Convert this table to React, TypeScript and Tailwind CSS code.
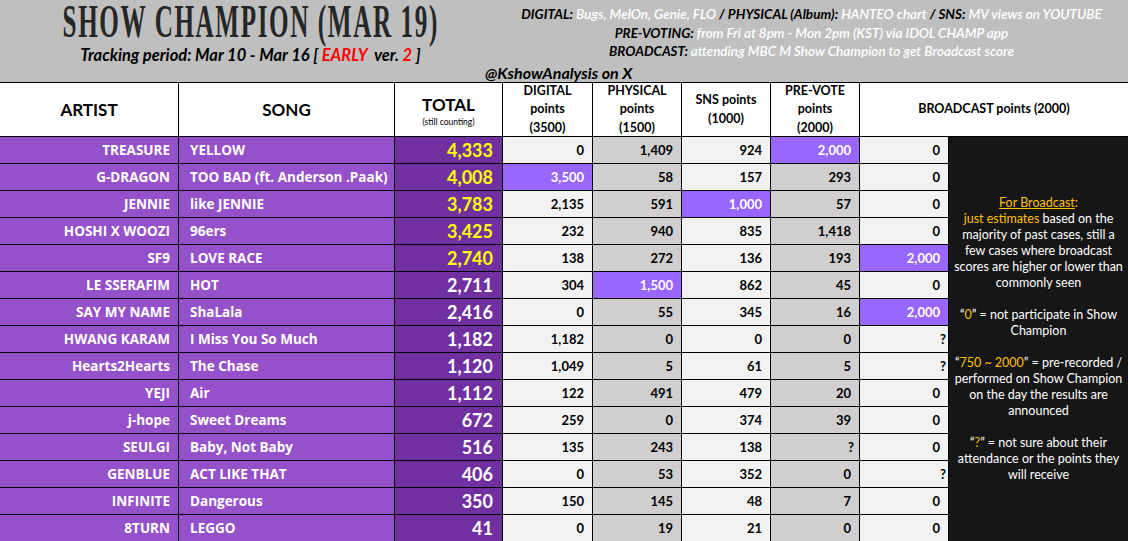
import React from "react";

type Row = {
  artist: string;
  song: string;
  total: string;
  top: boolean;
  cells: string[];
  hi: number; // index of highlighted cell, -1 none
};

const rows: Row[] = [
  { artist: "TREASURE", song: "YELLOW", total: "4,333", top: true, cells: ["0", "1,409", "924", "2,000", "0"], hi: 3 },
  { artist: "G-DRAGON", song: "TOO BAD (ft. Anderson .Paak)", total: "4,008", top: true, cells: ["3,500", "58", "157", "293", "0"], hi: 0 },
  { artist: "JENNIE", song: "like JENNIE", total: "3,783", top: true, cells: ["2,135", "591", "1,000", "57", "0"], hi: 2 },
  { artist: "HOSHI X WOOZI", song: "96ers", total: "3,425", top: true, cells: ["232", "940", "835", "1,418", "0"], hi: -1 },
  { artist: "SF9", song: "LOVE RACE", total: "2,740", top: true, cells: ["138", "272", "136", "193", "2,000"], hi: 4 },
  { artist: "LE SSERAFIM", song: "HOT", total: "2,711", top: false, cells: ["304", "1,500", "862", "45", "0"], hi: 1 },
  { artist: "SAY MY NAME", song: "ShaLala", total: "2,416", top: false, cells: ["0", "55", "345", "16", "2,000"], hi: 4 },
  { artist: "HWANG KARAM", song: "I Miss You So Much", total: "1,182", top: false, cells: ["1,182", "0", "0", "0", "?"], hi: -1 },
  { artist: "Hearts2Hearts", song: "The Chase", total: "1,120", top: false, cells: ["1,049", "5", "61", "5", "?"], hi: -1 },
  { artist: "YEJI", song: "Air", total: "1,112", top: false, cells: ["122", "491", "479", "20", "0"], hi: -1 },
  { artist: "j-hope", song: "Sweet Dreams", total: "672", top: false, cells: ["259", "0", "374", "39", "0"], hi: -1 },
  { artist: "SEULGI", song: "Baby, Not Baby", total: "516", top: false, cells: ["135", "243", "138", "?", "0"], hi: -1 },
  { artist: "GENBLUE", song: "ACT LIKE THAT", total: "406", top: false, cells: ["0", "53", "352", "0", "?"], hi: -1 },
  { artist: "INFINITE", song: "Dangerous", total: "350", top: false, cells: ["150", "145", "48", "7", "0"], hi: -1 },
  { artist: "8TURN", song: "LEGGO", total: "41", top: false, cells: ["0", "19", "21", "0", "0"], hi: -1 },
];

const colBg = ["bg-[#f2f2f2]", "bg-[#d0cece]", "bg-[#f2f2f2]", "bg-[#d0cece]", "bg-[#f2f2f2]"];

function Header() {
  return (
    <div className="flex h-[82px] bg-[#bfbfbf]">
      <div className="w-[483px] pl-[18px] flex flex-col items-center">
        <div className="flex justify-center w-full h-[42px]">
          <span className="inline-block whitespace-nowrap scale-x-[0.535] origin-center text-[47px] leading-[42px] font-bold tracking-[3px] text-[#262626] font-['Liberation_Serif',serif]">
            SHOW CHAMPION (MAR 19)
          </span>
        </div>
        <div className="mt-[3px] text-[16.5px] leading-[20px] font-bold italic text-black whitespace-nowrap">
          Tracking period: Mar 10 - Mar 16 [ <span className="text-[#ff0000]">EARLY</span>&nbsp; ver.{" "}
          <span className="text-[#ff0000]">2</span> ]
        </div>
      </div>
      <div className="flex-1 flex flex-col">
        <div className="pl-[12px] pt-[5px] flex flex-col items-center text-[13.5px] leading-[18.5px] font-bold italic whitespace-nowrap">
          <div>
            <span className="text-black">DIGITAL:</span>{" "}
            <span className="text-white font-semibold">Bugs, MelOn, Genie, FLO</span>{" "}
            <span className="text-black">/ PHYSICAL (Album):</span>{" "}
            <span className="text-white font-semibold">HANTEO chart</span>{" "}
            <span className="text-black">/ SNS:</span>{" "}
            <span className="text-white font-semibold">MV views on YOUTUBE</span>
          </div>
          <div>
            <span className="text-black">PRE-VOTING:</span>{" "}
            <span className="text-white font-semibold">from Fri at 8pm - Mon 2pm (KST) via IDOL CHAMP app</span>
          </div>
          <div>
            <span className="text-black">BROADCAST:</span>{" "}
            <span className="text-white font-semibold">attending MBC M Show Champion to get Broadcast score</span>
          </div>
        </div>
        <div className="mt-auto pl-[2px] text-[16px] leading-[19px] font-bold italic text-black">
          @KshowAnalysis on X
        </div>
      </div>
    </div>
  );
}

function Panel() {
  const o = "text-[#ffc000]";
  return (
    <div className="col-start-9 row-start-2 row-span-15 bg-[#161616] flex flex-col items-center justify-center text-white text-[12.5px] leading-[16px] whitespace-nowrap">
      <div className={o}>
        <span className="underline">For Broadcast</span>:
      </div>
      <div>
        <span className={o}>just estimates</span> based on the
      </div>
      <div>majority of past cases, still a</div>
      <div>few cases where broadcast</div>
      <div>scores are higher or lower than</div>
      <div>commonly seen</div>
      <div className="h-[16px]" />
      <div>
        “<span className={o}>0</span>” = not participate in Show
      </div>
      <div>Champion</div>
      <div className="h-[16px]" />
      <div>
        “<span className={o}>750 ~ 2000</span>” = pre-recorded /
      </div>
      <div>performed on Show Champion</div>
      <div>on the day the results are</div>
      <div>announced</div>
      <div className="h-[16px]" />
      <div>
        “<span className={o}>?</span>” = not sure about their
      </div>
      <div>attendance or the points they</div>
      <div>will receive</div>
    </div>
  );
}

function HeadCell({ lines }: { lines: string[] }) {
  return (
    <div className="bg-white flex flex-col items-center justify-center text-[12.5px] leading-[18.5px] font-bold text-black">
      {lines.map((l) => (
        <div key={l} className="whitespace-nowrap">{l}</div>
      ))}
    </div>
  );
}

export default function App() {
  return (
    <div className="w-[1128px] h-[541px] overflow-hidden bg-white font-['Lato','Liberation_Sans',sans-serif]">
      <Header />
      <div className="grid grid-cols-[178px_215px_107px_89px_88px_88px_88px_88px_179px] grid-rows-[53px_repeat(15,26px)] gap-px bg-black border-t border-black">
        <div className="bg-white flex items-center justify-center text-[17px] font-bold text-black">ARTIST</div>
        <div className="bg-white flex items-center justify-center text-[17px] font-bold text-black">SONG</div>
        <div className="bg-white flex flex-col items-center justify-center text-black">
          <div className="text-[17px] leading-[20px] font-bold mt-[4px]">TOTAL</div>
          <div className="text-[8.5px] leading-[14px]">(still counting)</div>
        </div>
        <HeadCell lines={["DIGITAL", "points", "(3500)"]} />
        <HeadCell lines={["PHYSICAL", "points", "(1500)"]} />
        <HeadCell lines={["SNS points", "(1000)"]} />
        <HeadCell lines={["PRE-VOTE", "points", "(2000)"]} />
        <div className="col-span-2 bg-white flex items-center justify-center text-[12.5px] font-bold text-black">
          BROADCAST points (2000)
        </div>
        <Panel />
        {rows.map((r) => (
          <React.Fragment key={r.artist}>
            <div className="bg-[#9551c9] flex items-center justify-end pr-[8px] pt-px text-[13.5px] font-bold text-white whitespace-nowrap font-['Open_Sans','Lato',sans-serif]">
              {r.artist}
            </div>
            <div className="bg-[#9551c9] flex items-center pl-[11px] pt-px text-[13.5px] font-bold text-white whitespace-nowrap font-['Open_Sans','Lato',sans-serif]">
              {r.song}
            </div>
            <div
              className={
                "bg-[#7030a0] flex items-center justify-end pr-[9px] pt-px text-[18px] font-bold " +
                (r.top ? "text-[#ffff00]" : "text-white")
              }
            >
              {r.total}
            </div>
            {r.cells.map((c, i) => (
              <div
                key={i}
                className={
                  "flex items-center justify-end pt-px text-[13px] font-bold " +
                  (c === "?" ? (i === 4 ? "pr-[2px] " : "pr-[5px] ") : "pr-[8px] ") +
                  (i === r.hi ? "bg-[#9966ff] text-white" : colBg[i] + " text-black")
                }
              >
                {c}
              </div>
            ))}
          </React.Fragment>
        ))}
      </div>
    </div>
  );
}
